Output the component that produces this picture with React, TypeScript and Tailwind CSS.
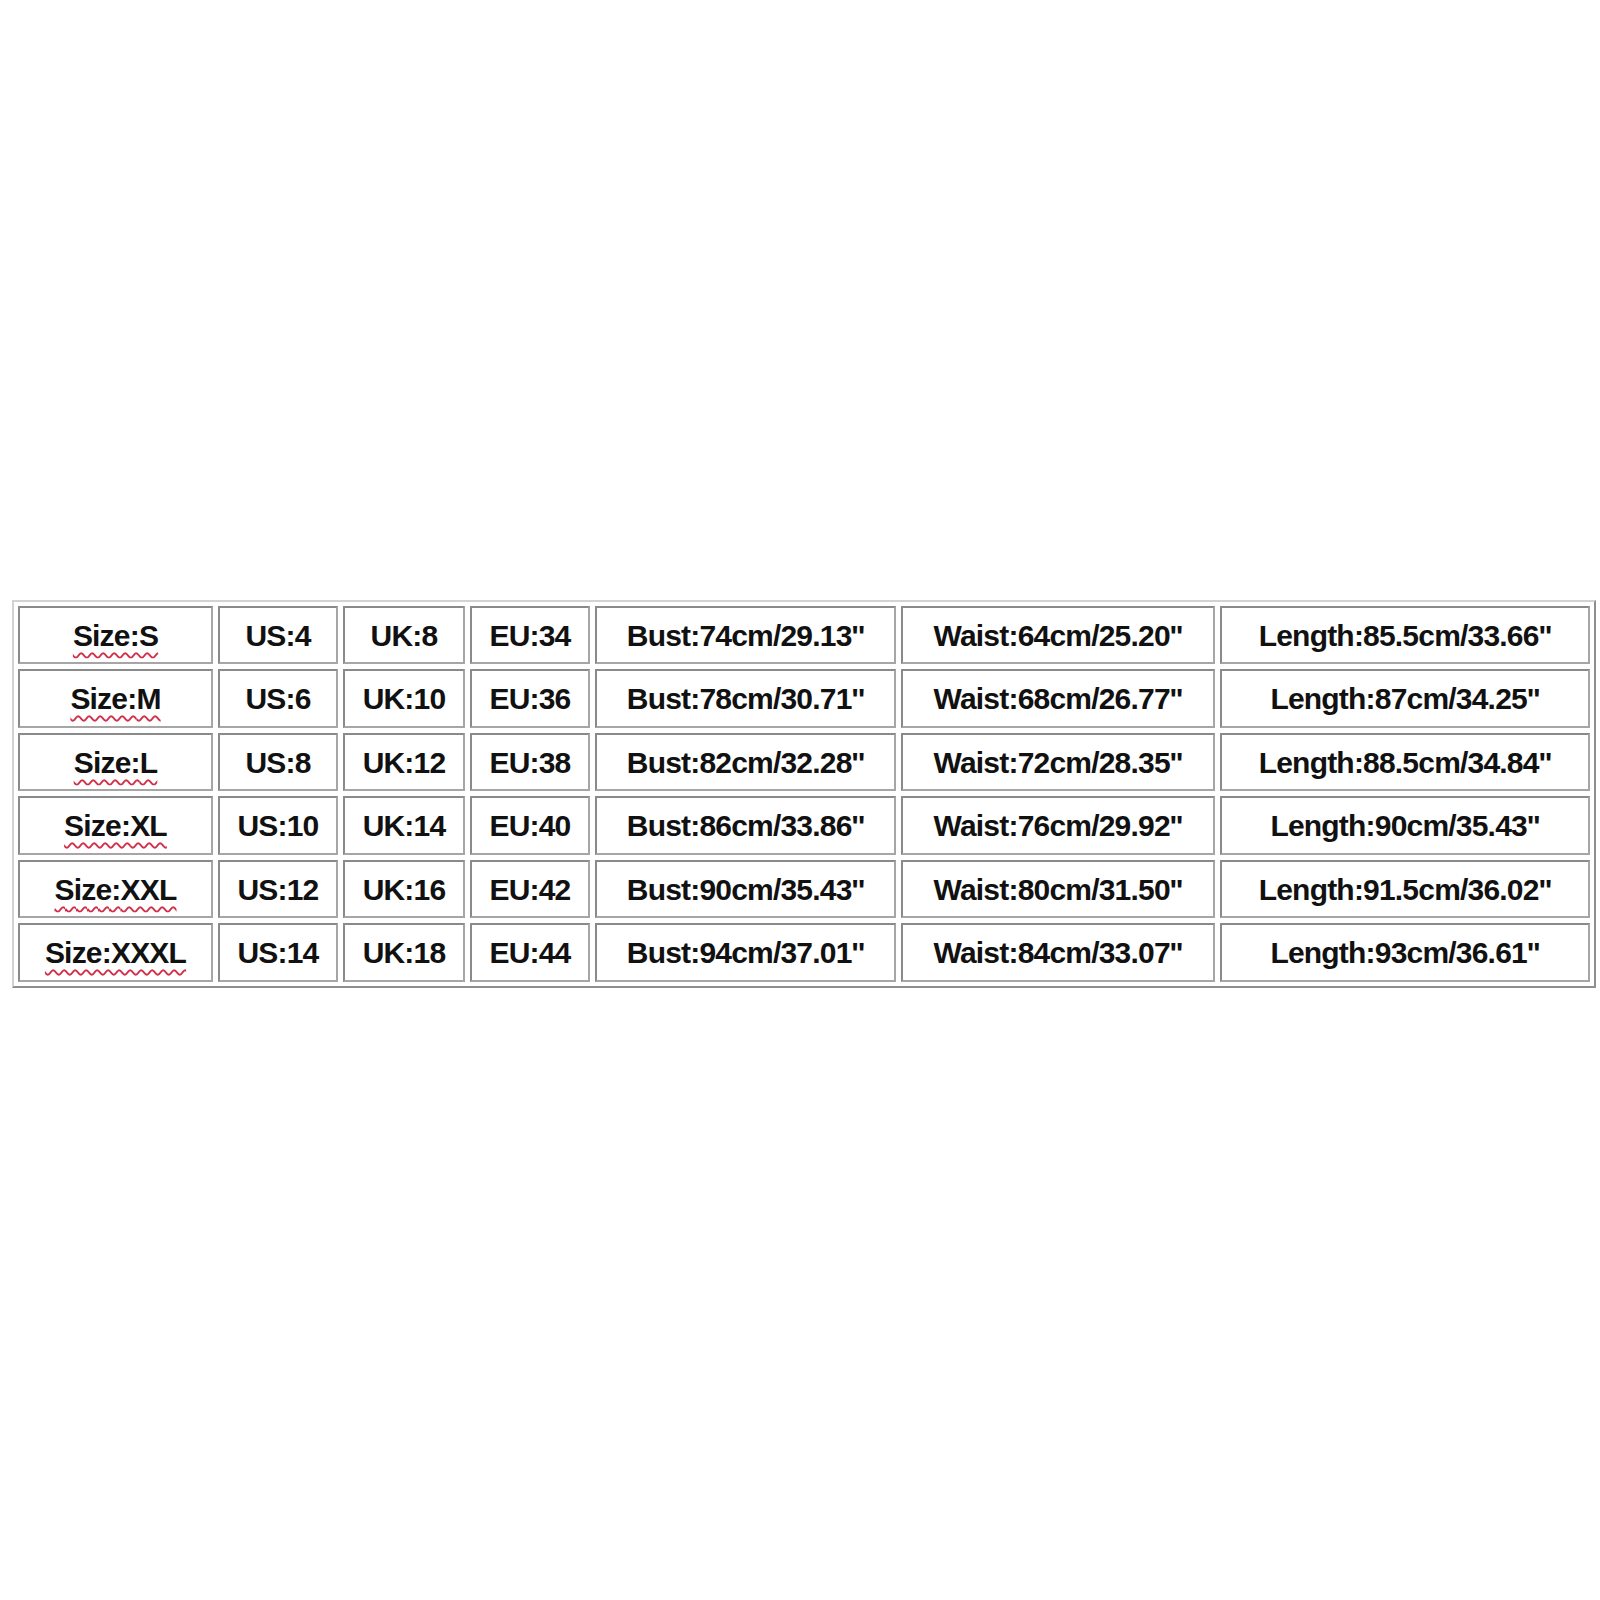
const rows = [
  ['S', 'US:4', 'UK:8', 'EU:34', 'Bust:74cm/29.13\'\'', 'Waist:64cm/25.20\'\'', 'Length:85.5cm/33.66\'\''],
  ['M', 'US:6', 'UK:10', 'EU:36', 'Bust:78cm/30.71\'\'', 'Waist:68cm/26.77\'\'', 'Length:87cm/34.25\'\''],
  ['L', 'US:8', 'UK:12', 'EU:38', 'Bust:82cm/32.28\'\'', 'Waist:72cm/28.35\'\'', 'Length:88.5cm/34.84\'\''],
  ['XL', 'US:10', 'UK:14', 'EU:40', 'Bust:86cm/33.86\'\'', 'Waist:76cm/29.92\'\'', 'Length:90cm/35.43\'\''],
  ['XXL', 'US:12', 'UK:16', 'EU:42', 'Bust:90cm/35.43\'\'', 'Waist:80cm/31.50\'\'', 'Length:91.5cm/36.02\'\''],
  ['XXXL', 'US:14', 'UK:18', 'EU:44', 'Bust:94cm/37.01\'\'', 'Waist:84cm/33.07\'\'', 'Length:93cm/36.61\'\''],
]

function Cell({ children }: { children: React.ReactNode }) {
  return (
    <div className="flex items-center justify-center border-2 border-t-[#8a8a8a] border-l-[#8a8a8a] border-r-[#a6a6a6] border-b-[#a6a6a6] bg-white">
      {children}
    </div>
  )
}

export default function App() {
  return (
    <div
      className="min-h-[1600px] w-[1600px] bg-white pt-[600px] pl-[12px] text-[#111] font-bold text-[30px] tracking-[-0.8px]"
      style={{ fontFamily: '"Liberation Sans", Arial, sans-serif' }}
    >
      {/* Size chart */}
      <div className="inline-block border-2 border-t-[#d2d2d2] border-l-[#d2d2d2] border-r-[#8e8e8e] border-b-[#8e8e8e] p-[4px]">
        <div className="grid grid-cols-[195px_120px_122px_120px_301px_314px_370px] grid-rows-[58px_59px_58px_59px_58px_59px] gap-[5px]">
          {rows.map((r) => (
            <div key={r[0]} className="contents">
              <Cell>
                <span className="underline decoration-wavy decoration-[#d0304a] decoration-[length:1.5px] underline-offset-[6px]">
                  Size:{r[0]}
                </span>
              </Cell>
              {r.slice(1).map((t, i) => (
                <Cell key={i}>{t}</Cell>
              ))}
            </div>
          ))}
        </div>
      </div>
    </div>
  )
}
